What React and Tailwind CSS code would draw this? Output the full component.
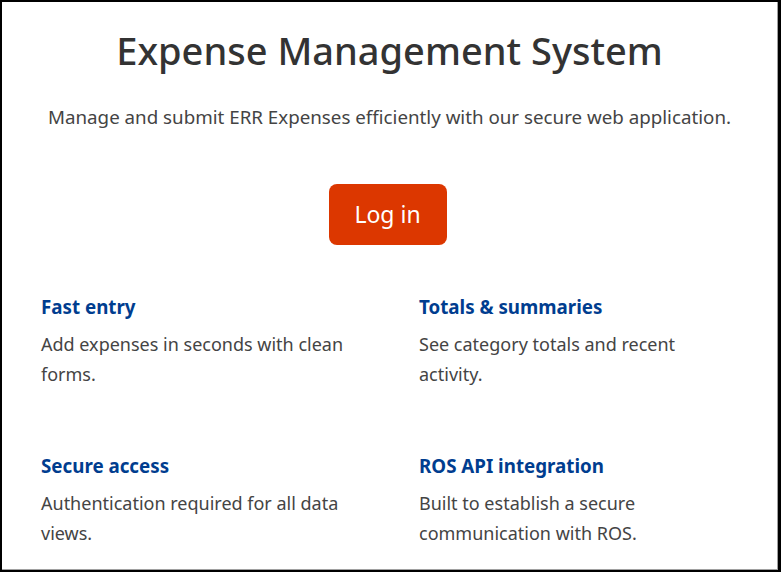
const features = [
  {
    title: "Fast entry",
    text: "Add expenses in seconds with clean forms.",
  },
  {
    title: "Totals & summaries",
    text: "See category totals and recent activity.",
  },
  {
    title: "Secure access",
    text: "Authentication required for all data views.",
  },
  {
    title: "ROS API integration",
    text: "Built to establish a secure communication with ROS.",
  },
];

function App() {
  return (
    <div className="h-[572px] w-[781px] overflow-hidden border-t-2 border-l-2 border-r-[3px] border-b-2 border-black bg-white font-['Noto_Sans',sans-serif]">
      <div className="h-full border-r border-b border-[#a0a0a0]">
        <main className="flex flex-col items-center pt-[24px]">
          <h1 className="text-[38px] font-medium leading-[48px] text-[#333]">
            Expense Management System
          </h1>
          <p className="mt-[29px] text-[18.75px] leading-[28px] text-[#444]">
            Manage and submit ERR Expenses efficiently with our secure web application.
          </p>
          <button
            type="button"
            className="mt-[53px] ml-[-4px] h-[61px] w-[118px] rounded-lg bg-[#dc3700] text-[23px] text-white"
          >
            Log in
          </button>
        </main>

        <section className="mt-[49px] grid grid-cols-[310px_310px] gap-x-[68px] gap-y-[64px] pl-[39px]">
          {features.map((f) => (
            <div key={f.title}>
              <h3 className="text-[18.75px] font-bold leading-[26px] text-[#003d8f]">
                {f.title}
              </h3>
              <p className="mt-[9px] text-[18px] leading-[30px] text-[#444]">
                {f.text}
              </p>
            </div>
          ))}
        </section>
      </div>
    </div>
  );
}

export default App;
